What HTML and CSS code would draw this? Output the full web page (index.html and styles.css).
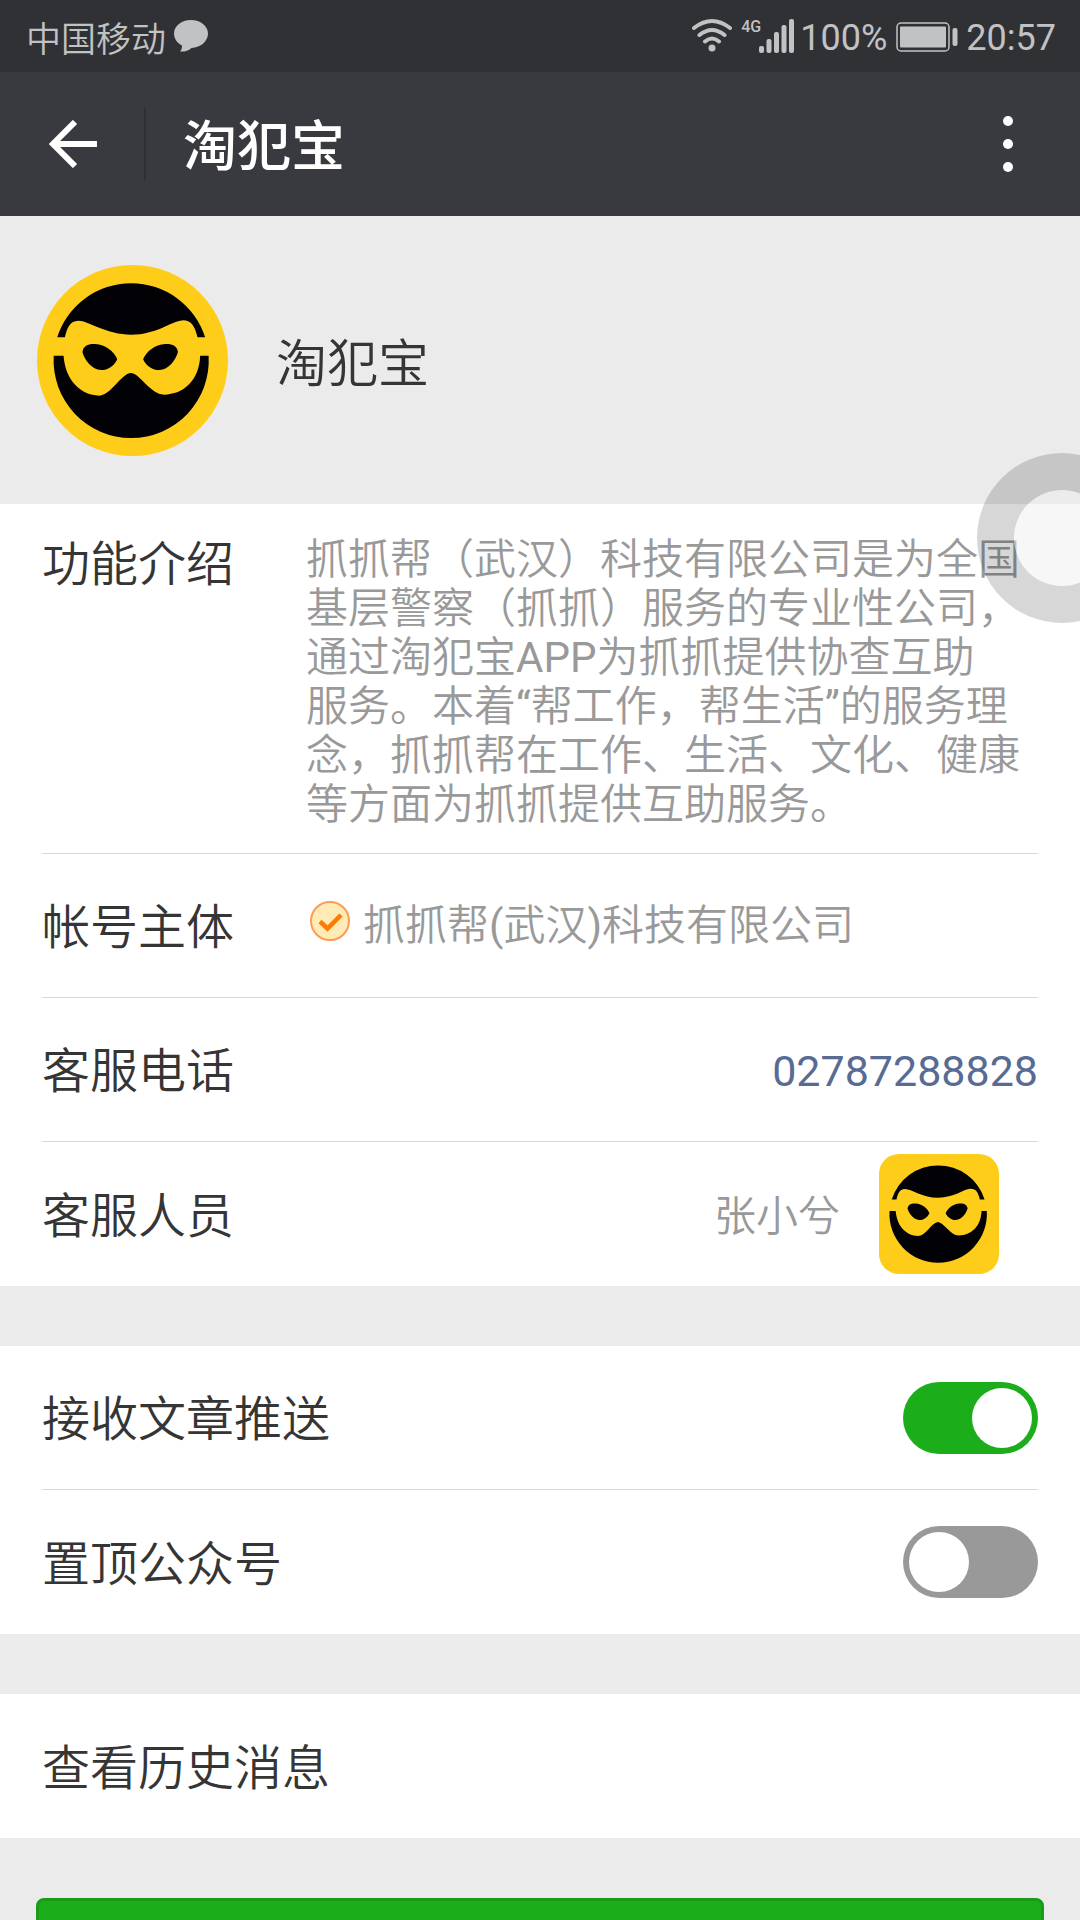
FILE: index.html
```html
<!DOCTYPE html>
<html lang="zh-CN">
<head>
<meta charset="utf-8">
<meta name="viewport" content="width=device-width, initial-scale=1">
<title>淘犯宝</title>
<link rel="stylesheet" href="styles.css">
</head>
<body>
<svg class="defs" aria-hidden="true">
  <symbol id="mask" viewBox="110 73 576 576">
    <g fill="#020106">
      <path d="M171 291A234 234 0 0 1 617 291H594C586 258 576 239 548 240C515 242 470 283 394 283C320 283 262 240 235 241C206 241 200 268 194 291Z"/>
      <path d="M160.400 347H190C196 422 242 466 298 467C332 467 365 400 393 399C421 400 452 464 493 464C552 464 600 420 602 347H627.600A234 234 0 1 1 160.400 347Z"/>
      <path id="eye" d="M247 335C250 316 264 310 285 311C318 313 341 333 352 357C342 378 324 390 303 390C275 388 254 360 247 335Z"/>
      <use href="#eye" transform="matrix(-1 0 0 1 782 0)"/>
    </g>
  </symbol>
</svg>
<div class="app">
  <div class="status">
    <div class="status-side">
      <span class="carrier">中国移动</span>
      <svg width="34" height="34" viewBox="0 0 34 34"><path fill="currentColor" d="M17 1C26.500 1 34 7 34 14.500C34 22 27 28.500 17.500 29C14 32 10 33 6 32.500C7.500 31 8 29 8 26.500C3 24 0 19.500 0 14.500C0 7 7.500 1 17 1Z"/></svg>
    </div>
    <div class="status-side">
      <svg width="40" height="36" viewBox="0 0 40 36" fill="none" stroke="currentColor" stroke-width="4" stroke-linecap="round"><path d="M2 10Q20-4 38 10M7.500 17Q20 7 32.500 17M13 23.500Q20 17.500 27 23.500"/><circle cx="20" cy="30" r="3.500" fill="currentColor" stroke="none"/></svg>
      <div class="cell">
        <span class="net">4G</span>
        <svg width="35" height="34" viewBox="0 0 35 34" fill="currentColor"><rect x="0" y="27" width="5" height="7" rx="2"/><rect x="7.500" y="20" width="5" height="14" rx="2"/><rect x="15" y="13" width="5" height="21" rx="2"/><rect x="22.500" y="6" width="5" height="28" rx="2"/><rect x="30" y="0" width="5" height="34" rx="2"/></svg>
      </div>
      <span class="reading">100%</span>
      <svg class="battery" width="62" height="32" viewBox="0 -2 62 32"><rect x="1" y="1" width="52" height="28" rx="4" fill="none" stroke="currentColor" stroke-width="1.500"/><rect x="4" y="4.500" width="46" height="21" rx="1" fill="currentColor"/><rect x="56.500" y="6" width="5" height="18" rx="2" fill="currentColor"/></svg>
      <span class="reading">20:57</span>
    </div>
  </div>

  <header class="bar">
    <button class="back" aria-label="返回"><svg width="48" height="48" viewBox="0 0 48 48" fill="none" stroke="currentColor" stroke-width="6"><path d="M26 2L4 24L26 46M4 24H48"/></svg></button>
    <h1 class="title">淘犯宝</h1>
    <button class="more" aria-label="更多"><svg width="10" height="56" viewBox="0 0 10 56" fill="currentColor"><circle cx="5" cy="5" r="5"/><circle cx="5" cy="28" r="5"/><circle cx="5" cy="51" r="5"/></svg></button>
  </header>

  <section class="profile">
    <svg class="avatar"><use href="#mask"/></svg>
    <h2 class="name">淘犯宝</h2>
  </section>

  <main>
    <section class="group">
      <div class="row intro">
        <span class="label">功能介绍</span>
        <p class="text">抓抓帮（武汉）科技有限公司是为全国基层警察（抓抓）服务的专业性公司，通过淘犯宝APP为抓抓提供协查互助服&#8288;务。本着“帮工作，帮生活”的服务理念，抓抓帮在工作、生活、文化、健康等方面为抓抓提供互助服务。</p>
      </div>
      <div class="row">
        <span class="label">帐号主体</span>
        <span class="owner">
          <svg width="40" height="40" viewBox="0 0 40 40"><circle cx="20" cy="20" r="19" fill="#ffebb5" stroke="#ff9b52" stroke-width="2"/><path d="M10 20.500L17.500 27.500L31 14" fill="none" stroke="#ff7a00" stroke-width="4.500"/></svg>
          <span>抓抓帮(武汉)科技有限公司</span>
        </span>
      </div>
      <div class="row">
        <span class="label">客服电话</span>
        <a class="phone" href="tel:02787288828">02787288828</a>
      </div>
      <div class="row">
        <span class="label">客服人员</span>
        <span class="staff"><span class="reading">张小兮</span><svg class="avatar small"><use href="#mask"/></svg></span>
      </div>
    </section>

    <section class="group">
      <div class="row">
        <label class="label" for="push">接收文章推送</label>
        <input class="switch" type="checkbox" role="switch" id="push" checked>
      </div>
      <div class="row">
        <label class="label" for="pin">置顶公众号</label>
        <input class="switch" type="checkbox" role="switch" id="pin">
      </div>
    </section>

    <section class="group">
      <a class="row" href="#history"><span class="label">查看历史消息</span></a>
    </section>

    <div class="actions"><button class="enter" aria-label="进入公众号"></button></div>
  </main>
  <button class="assist" aria-label="悬浮球"></button>
</div>
</body>
</html>
```
FILE: styles.css
```css
* {
  box-sizing: border-box;
}

body {
  margin: 0;
  background: #ebebeb;
  color: #353535;
  font-family: Roboto, "Noto Sans CJK SC DemiLight", "Noto Sans CJK SC", sans-serif;
  font-weight: 400;
}

h1, h2, p {
  margin: 0;
  font-weight: inherit;
}

button {
  padding: 0;
  border: 0;
  background: none;
  color: inherit;
  font: inherit;
}

a {
  color: inherit;
  text-decoration: none;
}

svg {
  display: block;
  flex: none;
}

.defs {
  position: absolute;
  width: 0;
  height: 0;
}

.app {
  position: relative;
  height: 100vh;
  overflow: hidden;
}

/* system status bar */
.status {
  display: flex;
  justify-content: space-between;
  height: 72px;
  padding: 0 24px 0 26px;
  background: #303135;
  color: #c1c2c4;
  font-size: 36px;
}

.status-side {
  display: flex;
  align-items: center;
}

.carrier {
  margin-right: 8px;
  font-size: 35px;
}

.reading {
  padding-top: 4px;
}

.cell {
  display: flex;
  align-items: flex-start;
  margin: 0 6px 0 9px;
}

.net {
  width: 18px;
  font-size: 16px;
  font-weight: 500;
  line-height: 16px;
}

.battery {
  margin: 0 8px 0 9px;
}

/* title bar */
.bar {
  display: flex;
  align-items: center;
  height: 144px;
  background: #393a3f;
  color: #fff;
}

.back {
  display: flex;
  justify-content: center;
  align-items: center;
  width: 146px;
  height: 72px;
  padding-left: 2px;
  border-right: 2px solid #2e2f33;
}

.title {
  flex: 1;
  margin-left: 37px;
  padding-bottom: 3px;
  font-family: "Noto Sans CJK SC", sans-serif;
  font-size: 54px;
  font-weight: 500;
}

.more {
  display: flex;
  justify-content: center;
  align-items: center;
  width: 144px;
  height: 144px;
}

/* account header */
.profile {
  display: flex;
  align-items: center;
  gap: 48px;
  height: 288px;
  padding: 0 37px;
}

.avatar {
  width: 191px;
  height: 191px;
  border-radius: 50%;
  background: #fecd1a;
}

.avatar.small {
  width: 120px;
  height: 120px;
  border-radius: 20px;
}

.name {
  font-size: 51px;
}

/* setting rows */
.group {
  margin-bottom: 60px;
  padding: 0 42px;
  background: #fff;
}

.row {
  display: flex;
  justify-content: space-between;
  align-items: center;
  min-height: 144px;
  border-bottom: 1px solid #d9d9d9;
}

.row:last-child {
  border-bottom: 0;
}

.label {
  flex: none;
  width: 264px;
  padding-top: 5px;
  font-size: 48px;
  line-height: 60px;
  white-space: nowrap;
}

.intro {
  align-items: flex-start;
  padding: 31px 0 24px;
}

.intro .label {
  padding-top: 0;
}

.text,
.owner,
.staff {
  color: #999;
  font-size: 42px;
  line-height: 49px;
}

.text {
  flex: 1;
}

.owner {
  display: flex;
  flex: 1;
  align-items: flex-start;
  gap: 13px;
  padding-left: 4px;
}

.phone {
  padding-top: 2px;
  color: #576b95;
  font-size: 43px;
}

.staff {
  display: flex;
  align-items: center;
  gap: 39px;
  margin-right: 39px;
}

.switch {
  appearance: none;
  display: flex;
  width: 135px;
  height: 72px;
  margin: 0;
  padding: 6px;
  border-radius: 36px;
  background: #999;
}

.switch::before {
  content: "";
  width: 60px;
  height: 60px;
  border-radius: 50%;
  background: #fff;
}

.switch:checked {
  justify-content: flex-end;
  background: #1cad1a;
}

.actions {
  padding: 0 36px;
}

.enter {
  display: block;
  width: 100%;
  height: 132px;
  border: 3px solid #1a9c19;
  border-radius: 8px;
  background: #1cad1a;
}

/* floating assistant ball, half off the right edge */
.assist {
  position: absolute;
  top: 453px;
  right: -67px;
  width: 170px;
  height: 170px;
  border: 37px solid rgba(0, 0, 0, 0.155);
  border-radius: 50%;
  background: rgba(238, 238, 238, 0.45) padding-box;
}
```
